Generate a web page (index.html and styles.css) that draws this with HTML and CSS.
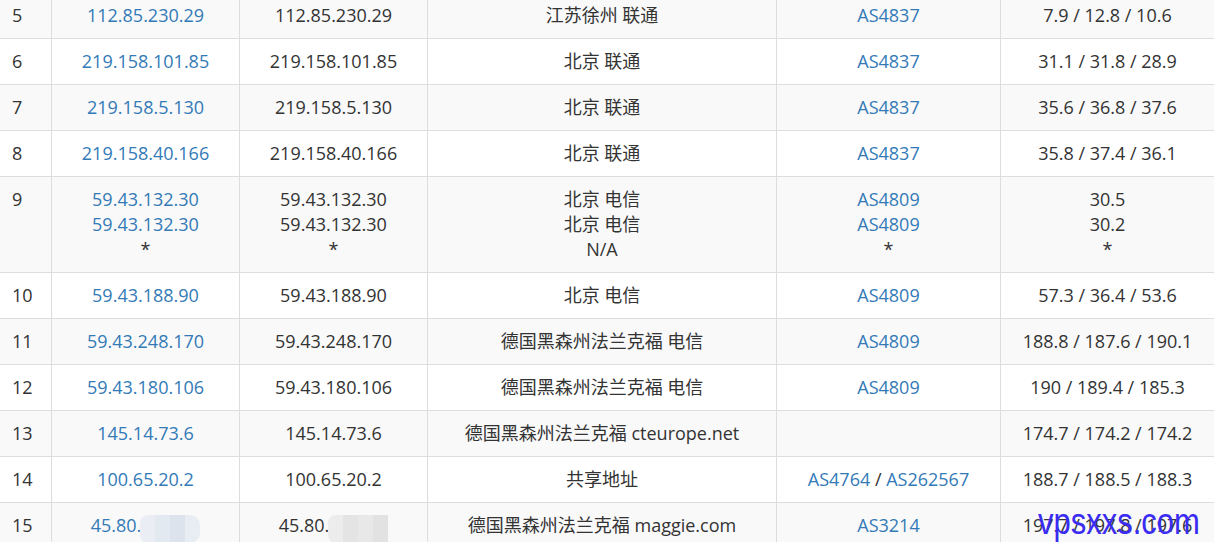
FILE: index.html
```html
<!DOCTYPE html>
<html lang="zh-CN">
<head>
<meta charset="utf-8">
<title>Traceroute</title>
<link rel="stylesheet" href="styles.css">
</head>
<body>
<div class="wrap">
<table class="trace">
<colgroup>
<col class="c-hop"><col class="c-ip"><col class="c-ip"><col class="c-loc"><col class="c-as"><col class="c-time">
</colgroup>
<tbody>
<tr><td>5</td><td><a>112.85.230.29</a></td><td>112.85.230.29</td><td>江苏徐州 联通</td><td><a>AS4837</a></td><td>7.9 / 12.8 / 10.6</td></tr>
<tr><td>6</td><td><a>219.158.101.85</a></td><td>219.158.101.85</td><td>北京 联通</td><td><a>AS4837</a></td><td>31.1 / 31.8 / 28.9</td></tr>
<tr><td>7</td><td><a>219.158.5.130</a></td><td>219.158.5.130</td><td>北京 联通</td><td><a>AS4837</a></td><td>35.6 / 36.8 / 37.6</td></tr>
<tr><td>8</td><td><a>219.158.40.166</a></td><td>219.158.40.166</td><td>北京 联通</td><td><a>AS4837</a></td><td>35.8 / 37.4 / 36.1</td></tr>
<tr><td>9</td><td><a>59.43.132.30</a><br><a>59.43.132.30</a><br>*</td><td>59.43.132.30<br>59.43.132.30<br>*</td><td>北京 电信<br>北京 电信<br>N/A</td><td><a>AS4809</a><br><a>AS4809</a><br>*</td><td>30.5<br>30.2<br>*</td></tr>
<tr><td>10</td><td><a>59.43.188.90</a></td><td>59.43.188.90</td><td>北京 电信</td><td><a>AS4809</a></td><td>57.3 / 36.4 / 53.6</td></tr>
<tr><td>11</td><td><a>59.43.248.170</a></td><td>59.43.248.170</td><td>德国黑森州法兰克福 电信</td><td><a>AS4809</a></td><td>188.8 / 187.6 / 190.1</td></tr>
<tr><td>12</td><td><a>59.43.180.106</a></td><td>59.43.180.106</td><td>德国黑森州法兰克福 电信</td><td><a>AS4809</a></td><td>190 / 189.4 / 185.3</td></tr>
<tr><td>13</td><td><a>145.14.73.6</a></td><td>145.14.73.6</td><td>德国黑森州法兰克福 cteurope.net</td><td></td><td>174.7 / 174.2 / 174.2</td></tr>
<tr><td>14</td><td><a>100.65.20.2</a></td><td>100.65.20.2</td><td>共享地址</td><td><a>AS4764</a> / <a>AS262567</a></td><td>188.7 / 188.5 / 188.3</td></tr>
<tr><td>15</td><td><a>45.80.</a><span class="mosaic blue"><i></i><i></i><i></i><i></i></span></td><td>45.80.<span class="mosaic gray"><i></i><i></i><i></i><i></i></span></td><td>德国黑森州法兰克福 maggie.com</td><td><a>AS3214</a></td><td>197.7 / 197.8 / 197.6</td></tr>
</tbody>
</table>
<div class="watermark">vpsxxs.com</div>
</div>
</body>
</html>
```
FILE: styles.css
```css
html, body {
  margin: 0;
  padding: 0;
  background: #fff;
  overflow: hidden;
}
.wrap {
  position: relative;
  width: 1214px;
  height: 542px;
  overflow: hidden;
}
.trace {
  margin-top: -8px;
  width: 1214px;
  table-layout: fixed;
  border-collapse: separate;
  border-spacing: 0;
  font-family: "Open Sans", "Noto Sans CJK SC", sans-serif;
  font-size: 18px;
  line-height: 25px;
  color: #333;
}
.c-hop { width: 51px; }
.c-ip { width: 188px; }
.c-loc { width: 349px; }
.c-as { width: 224px; }
.c-time { width: 214px; }
.trace td {
  padding: 10px 0;
  border-top: 1px solid #ddd;
  border-left: 1px solid #ddd;
  text-align: center;
  vertical-align: top;
  white-space: nowrap;
  overflow: hidden;
}
.trace td:first-child {
  border-left: none;
  text-align: left;
  padding-left: 12px;
}
.trace tr:nth-child(odd) td {
  background: #f9f9f9;
}
.trace a {
  color: #337ab7;
  text-decoration: none;
}
.mosaic {
  display: inline-flex;
  vertical-align: top;
  margin-left: -1px;
  margin-top: 2px;
  height: 28px;
}
.mosaic i {
  display: block;
  width: 15px;
  height: 28px;
}
.mosaic.blue i:nth-child(1) { background: #eaeef4; border-radius: 8px 0 0 8px; }
.mosaic.blue i:nth-child(2) { background: #e3e9f1; }
.mosaic.blue i:nth-child(3) { background: #dce3ed; }
.mosaic.blue i:nth-child(4) { background: #e8edf3; border-radius: 0 10px 10px 0; }
.mosaic.gray i:nth-child(1) { background: #ececec; border-radius: 8px 0 0 8px; }
.mosaic.gray i:nth-child(2) { background: #e4e4e4; }
.mosaic.gray i:nth-child(3) { background: #e8e8e8; }
.mosaic.gray i:nth-child(4) { background: #e2e2e2; }
.watermark {
  position: absolute;
  left: 1038px;
  top: 497px;
  font-family: "Liberation Sans", Arial, sans-serif;
  font-size: 31px;
  line-height: 40px;
  color: #3a2cf2;
  transform: scaleY(1.22);
  transform-origin: left top;
}
```
